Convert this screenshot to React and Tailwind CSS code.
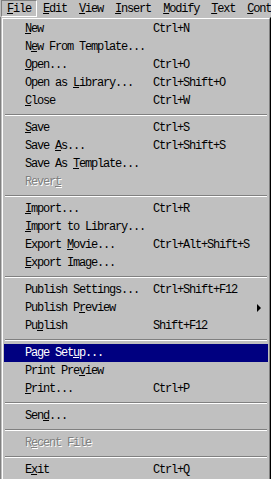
import React from 'react';

// Classic Windows menu: the File menu of Flash MX, opened from the menu bar
const barItems = [
  { key: 'F', rest: 'ile', pressed: true },
  { key: 'E', rest: 'dit' },
  { key: 'V', rest: 'iew' },
  { key: 'I', rest: 'nsert' },
  { key: 'M', rest: 'odify' },
  { key: 'T', rest: 'ext' },
  { key: 'C', rest: 'ont' },
];

// label split as [before, mnemonic, after]
const menu = [
  { l: ['', 'N', 'ew'], s: 'Ctrl+N' },
  { l: ['N', 'e', 'w From Template...'] },
  { l: ['', 'O', 'pen...'], s: 'Ctrl+O' },
  { l: ['Open as ', 'L', 'ibrary...'], s: 'Ctrl+Shift+O' },
  { l: ['', 'C', 'lose'], s: 'Ctrl+W' },
  'sep',
  { l: ['', 'S', 'ave'], s: 'Ctrl+S' },
  { l: ['Save ', 'A', 's...'], s: 'Ctrl+Shift+S' },
  { l: ['Save As ', 'T', 'emplate...'] },
  { l: ['Rever', 't', ''], off: true },
  'sep',
  { l: ['', 'I', 'mport...'], s: 'Ctrl+R' },
  { l: ['', 'I', 'mport to Library...'] },
  { l: ['Export ', 'M', 'ovie...'], s: 'Ctrl+Alt+Shift+S' },
  { l: ['', 'E', 'xport Image...'] },
  'sep',
  { l: ['Publish Settings...', '', ''], s: 'Ctrl+Shift+F12' },
  { l: ['Publish P', 'r', 'eview'], sub: true },
  { l: ['Pu', 'b', 'lish'], s: 'Shift+F12' },
  'sep',
  { l: ['Page Set', 'u', 'p...'], active: true },
  { l: ['Print Pre', 'v', 'iew'] },
  { l: ['', 'P', 'rint...'], s: 'Ctrl+P' },
  'sep',
  { l: ['Sen', 'd', '...'] },
  'sep',
  { l: ['R', 'e', 'cent File'], off: true },
  'sep',
  { l: ['E', 'x', 'it'], s: 'Ctrl+Q' },
];

const Separator = () => (
  <div className="h-[9px] flex flex-col justify-center px-[1px]">
    <div className="h-[1px] bg-[#808080]"></div>
    <div className="h-[1px] bg-white"></div>
  </div>
);

const Row = ({ item }) => {
  let tone = 'text-black';
  if (item.active) tone = 'bg-[#000080] text-white';
  if (item.off) tone = 'text-[#808080] [text-shadow:1px_1px_0_#ffffff]';
  return (
    <div className={`h-[18px] flex items-center pl-[21px] whitespace-pre ${tone}`}>
      <span className="w-[128px] shrink-0">
        {item.l[0]}
        {item.l[1] && <u className="underline-offset-[1px]">{item.l[1]}</u>}
        {item.l[2]}
      </span>
      {item.s && <span>{item.s}</span>}
      {item.sub && (
        <span className="ml-auto mr-[7px] w-0 h-0 border-y-[4px] border-y-transparent border-l-[4px] border-l-black"></span>
      )}
    </div>
  );
};

const App = () => {
  return (
    <div className="w-[271px] h-[479px] overflow-hidden bg-[#c0c0c0] font-['Liberation_Mono',monospace] text-[12px] tracking-[-1.2px] leading-none select-none">
      {/* Barre de menus */}
      <div className="h-[17px] flex pl-[1px] text-black whitespace-pre">
        {barItems.map((b) => (
          <div
            key={b.key + b.rest}
            className={
              b.pressed
                ? 'h-full flex items-center px-[5px] border-t border-l border-[#808080] border-b-white border-r-white border-b border-r'
                : 'h-full flex items-center px-[6px]'
            }
          >
            <u className="underline-offset-[1px]">{b.key}</u>
            {b.rest}
          </div>
        ))}
      </div>

      {/* Menu déroulant */}
      <div className="flex">
        <div className="w-[1px] shrink-0 bg-[#808080]"></div>
        <div className="w-[270px] border-t border-l border-t-[#c0c0c0] border-l-[#c0c0c0] border-r border-r-black">
          <div className="border-t border-l border-white border-r border-r-[#808080] p-[1px]">
            {menu.map((item, i) =>
              item === 'sep' ? <Separator key={i} /> : <Row key={i} item={item} />
            )}
          </div>
        </div>
      </div>
    </div>
  );
};

export default App;
